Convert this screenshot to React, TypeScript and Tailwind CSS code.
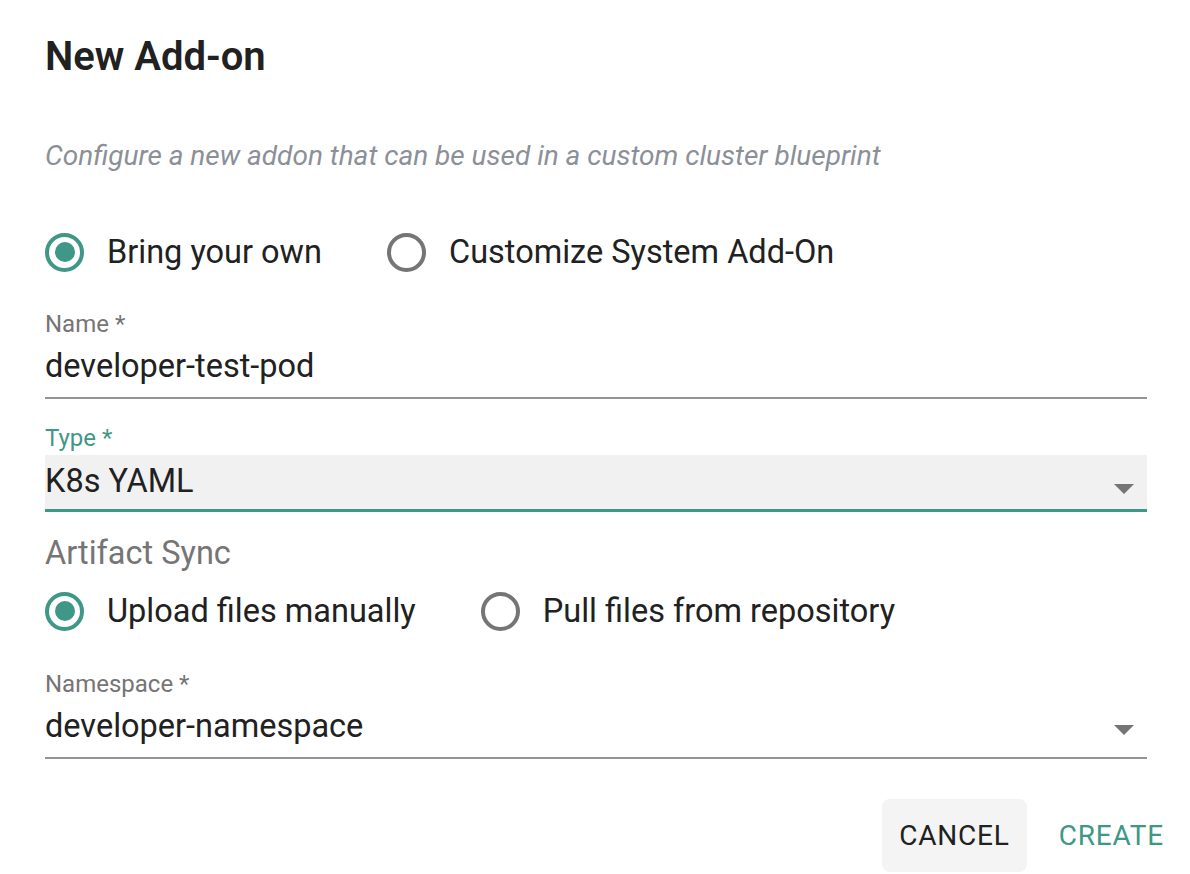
import React from "react";

function Radio({ checked }: { checked: boolean }) {
  return (
    <span
      className={
        "flex h-[39px] w-[39px] shrink-0 items-center justify-center rounded-full border-[4px] " +
        (checked ? "border-[#3f9787]" : "border-[#757575]")
      }
    >
      {checked && <span className="block h-[20px] w-[20px] rounded-full bg-[#3f9787]" />}
    </span>
  );
}

function RadioOption({ checked, label }: { checked: boolean; label: string }) {
  return (
    <div className="flex items-center gap-[23px]">
      <Radio checked={checked} />
      <span className="text-[32.5px] leading-[40px] text-[#212121]">{label}</span>
    </div>
  );
}

function Arrow() {
  return (
    <svg width="20" height="10" viewBox="0 0 20 10" className="block">
      <path d="M0 0 L20 0 L10 10 Z" fill="#757575" />
    </svg>
  );
}

export default function App() {
  return (
    <div
      className="w-[1190px] h-[874px] bg-white pl-[45px] pr-[43px] pt-[37px] overflow-hidden"
      style={{ fontFamily: "Roboto, 'Liberation Sans', sans-serif" }}
    >
      <h1 className="h-[40px] text-[40px] leading-[40px] font-semibold text-[#212121]">New Add-on</h1>

      <p className="mt-[63px] text-[28px] leading-[32px] italic text-[#8b9098]">
        Configure a new addon that can be used in a custom cluster blueprint
      </p>

      <div className="mt-[56px] flex h-[48px] items-center gap-[65px]">
        <RadioOption checked label="Bring your own" />
        <RadioOption checked={false} label="Customize System Add-On" />
      </div>

      <div className="mt-[34px]">
        <div className="text-[24px] leading-[28px] text-[#757575]">Name *</div>
        <div className="mt-[8px] border-b-2 border-[#949494] pb-[11px] text-[32.5px] leading-[40px] text-[#212121]">
          developer-test-pod
        </div>
      </div>

      <div className="mt-[25px]">
        <div className="text-[24px] leading-[28px] text-[#3f9787]">Type *</div>
        <div className="mt-[3px] flex h-[57px] items-start justify-between border-b-[3px] border-[#3f9787] bg-[#f1f1f1] pt-[6px]">
          <span className="text-[32.5px] leading-[40px] text-[#212121]">K8s YAML</span>
          <span className="mr-[13px] mt-[23px]">
            <Arrow />
          </span>
        </div>
      </div>

      <div className="mt-[21px] text-[32.5px] leading-[40px] text-[#757575]">Artifact Sync</div>

      <div className="mt-[14px] flex h-[48px] items-center gap-[65px]">
        <RadioOption checked label="Upload files manually" />
        <RadioOption checked={false} label="Pull files from repository" />
      </div>

      <div className="mt-[35px]">
        <div className="text-[24px] leading-[28px] text-[#757575]">Namespace *</div>
        <div className="mt-[8px] flex items-start justify-between border-b-2 border-[#949494] pb-[11px]">
          <span className="text-[32.5px] leading-[40px] text-[#212121]">developer-namespace</span>
          <span className="mr-[13px] mt-[19px]">
            <Arrow />
          </span>
        </div>
      </div>

      <div className="mt-[40px] -mr-[34px] flex justify-end gap-[15px]">
        <button className="h-[73px] rounded-[8px] bg-[#f4f4f4] px-[17px] text-[28px] tracking-[0.8px] text-[#212121]">
          CANCEL
        </button>
        <button className="h-[73px] rounded-[8px] px-[17px] text-[28px] tracking-[0.8px] text-[#3f9787]">
          CREATE
        </button>
      </div>
    </div>
  );
}
